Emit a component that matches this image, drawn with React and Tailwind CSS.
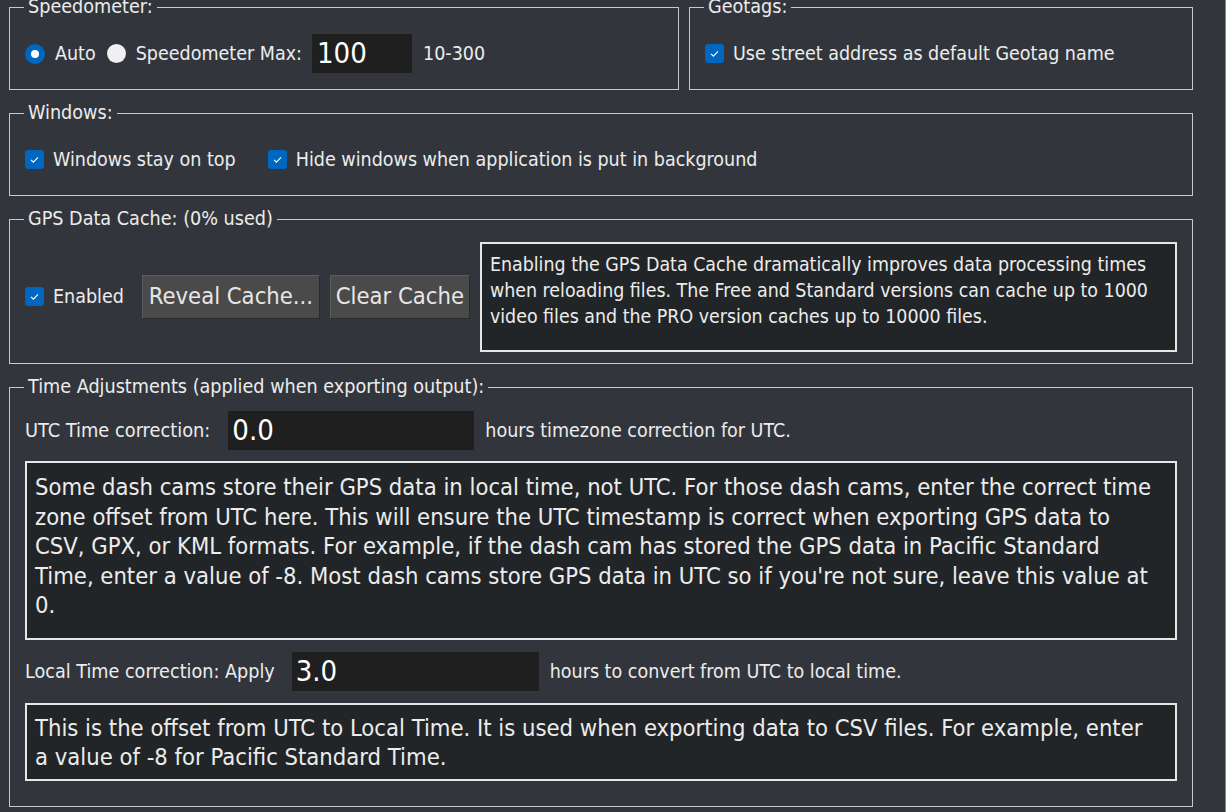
import React from 'react';

const Check = () => (
    <span className="w-[19px] h-[19px] rounded-[3px] bg-[#0067c0] flex items-center justify-center shrink-0">
        <svg width="13" height="13" viewBox="0 0 13 13" fill="none">
            <path d="M3 6.8 L5.4 9.2 L10 4.4" stroke="#ffffff" strokeWidth="1.1" />
        </svg>
    </span>
);

const Group = ({ title, className = '', children }) => (
    <fieldset className={`border border-[#c9c9c9] min-w-0 ${className}`}>
        <legend className="ml-[14px] px-[4px] text-[19.6px] leading-[22px]">{title}</legend>
        {children}
    </fieldset>
);

const App = () => {
    return (
        <div className="w-[1226px] h-[812px] overflow-hidden bg-[#32363c] border-r border-r-[#80858c] text-[#ececec] font-['DejaVu_Sans_Condensed','DejaVu_Sans',sans-serif]">
            <div className="-mt-[4px] pl-[9px] pr-[32px] flex flex-col gap-[12px]">

                {/* Speedometer + Geotags */}
                <div className="flex gap-[10px]">
                    <Group title="Speedometer:" className="w-[670px]">
                        <div className="h-[71px] px-[15px] flex items-center text-[19.5px]">
                            <span className="w-[20px] h-[20px] rounded-full bg-[#0067c0] flex items-center justify-center">
                                <span className="w-[8px] h-[8px] rounded-full bg-white"></span>
                            </span>
                            <span className="ml-[10px]">Auto</span>
                            <span className="ml-[11px] w-[19px] h-[19px] rounded-full bg-[#f0f0f0]"></span>
                            <span className="ml-[10px]">Speedometer Max:</span>
                            <div className="ml-[10px] w-[100px] h-[39px] bg-[#1f1f1f] flex items-center pl-[5px] text-[29px] text-white">100</div>
                            <span className="ml-[11px]">10-300</span>
                        </div>
                    </Group>
                    <Group title="Geotags:" className="flex-1">
                        <div className="h-[71px] px-[15px] flex items-center gap-[9px] text-[19.5px]">
                            <Check />
                            <span>Use street address as default Geotag name</span>
                        </div>
                    </Group>
                </div>

                {/* Windows */}
                <Group title="Windows:">
                    <div className="h-[71px] px-[15px] flex items-center text-[19.5px]">
                        <Check />
                        <span className="ml-[9px]">Windows stay on top</span>
                        <span className="ml-[32px]"><Check /></span>
                        <span className="ml-[9px]">Hide windows when application is put in background</span>
                    </div>
                </Group>

                {/* GPS Data Cache */}
                <Group title="GPS Data Cache: (0% used)">
                    <div className="h-[133px] pl-[15px] pr-[15px] flex items-center text-[19.5px]">
                        <Check />
                        <span className="ml-[9px]">Enabled</span>
                        <button className="ml-[18px] w-[178px] h-[44px] bg-[#4a4a4a] border border-[#5c5c5c] border-b-[#2a2a2a] border-r-[#2a2a2a] text-[23.6px] text-[#e6e6e6]">Reveal Cache...</button>
                        <button className="ml-[10px] w-[140px] h-[44px] bg-[#4a4a4a] border border-[#5c5c5c] border-b-[#2a2a2a] border-r-[#2a2a2a] text-[23.6px] text-[#e6e6e6]">Clear Cache</button>
                        <div className="ml-[10px] flex-1 h-[110px] border-2 border-[#e6e6e6] bg-[#222528] px-[8px] pt-[8px] text-[19.4px] leading-[26px]">
                            Enabling the GPS Data Cache dramatically improves data processing times<br />
                            when reloading files. The Free and Standard versions can cache up to 1000<br />
                            video files and the PRO version caches up to 10000 files.
                        </div>
                    </div>
                </Group>

                {/* Time Adjustments */}
                <Group title="Time Adjustments (applied when exporting output):">
                    <div className="px-[15px] pt-[13px] pb-[25px] flex flex-col">
                        <div className="flex items-center text-[19.8px]">
                            <span>UTC Time correction:</span>
                            <div className="ml-[18px] w-[246px] h-[39px] bg-[#1f1f1f] flex items-center pl-[4px] text-[29px] text-white">0.0</div>
                            <span className="ml-[11px] text-[19.5px]">hours timezone correction for UTC.</span>
                        </div>
                        <div className="mt-[11px] h-[179px] border-2 border-[#e6e6e6] bg-[#222528] px-[8px] pt-[10px] text-[23.6px] leading-[29.5px]">
                            Some dash cams store their GPS data in local time, not UTC. For those dash cams, enter the correct time<br />
                            zone offset from UTC here. This will ensure the UTC timestamp is correct when exporting GPS data to<br />
                            CSV, GPX, or KML formats. For example, if the dash cam has stored the GPS data in Pacific Standard<br />
                            Time, enter a value of -8. Most dash cams store GPS data in UTC so if you're not sure, leave this value at<br />
                            0.
                        </div>
                        <div className="mt-[12px] flex items-center text-[19.6px]">
                            <span>Local Time correction: Apply</span>
                            <div className="ml-[17px] w-[247px] h-[39px] bg-[#1f1f1f] flex items-center pl-[4px] text-[29px] text-white">3.0</div>
                            <span className="ml-[11px] text-[19.5px]">hours to convert from UTC to local time.</span>
                        </div>
                        <div className="mt-[12px] h-[78px] border-2 border-[#e6e6e6] bg-[#222528] px-[8px] pt-[9px] text-[23.6px] leading-[29px]">
                            This is the offset from UTC to Local Time. It is used when exporting data to CSV files. For example, enter<br />
                            a value of -8 for Pacific Standard Time.
                        </div>
                    </div>
                </Group>
            </div>
        </div>
    );
};

export default App;
